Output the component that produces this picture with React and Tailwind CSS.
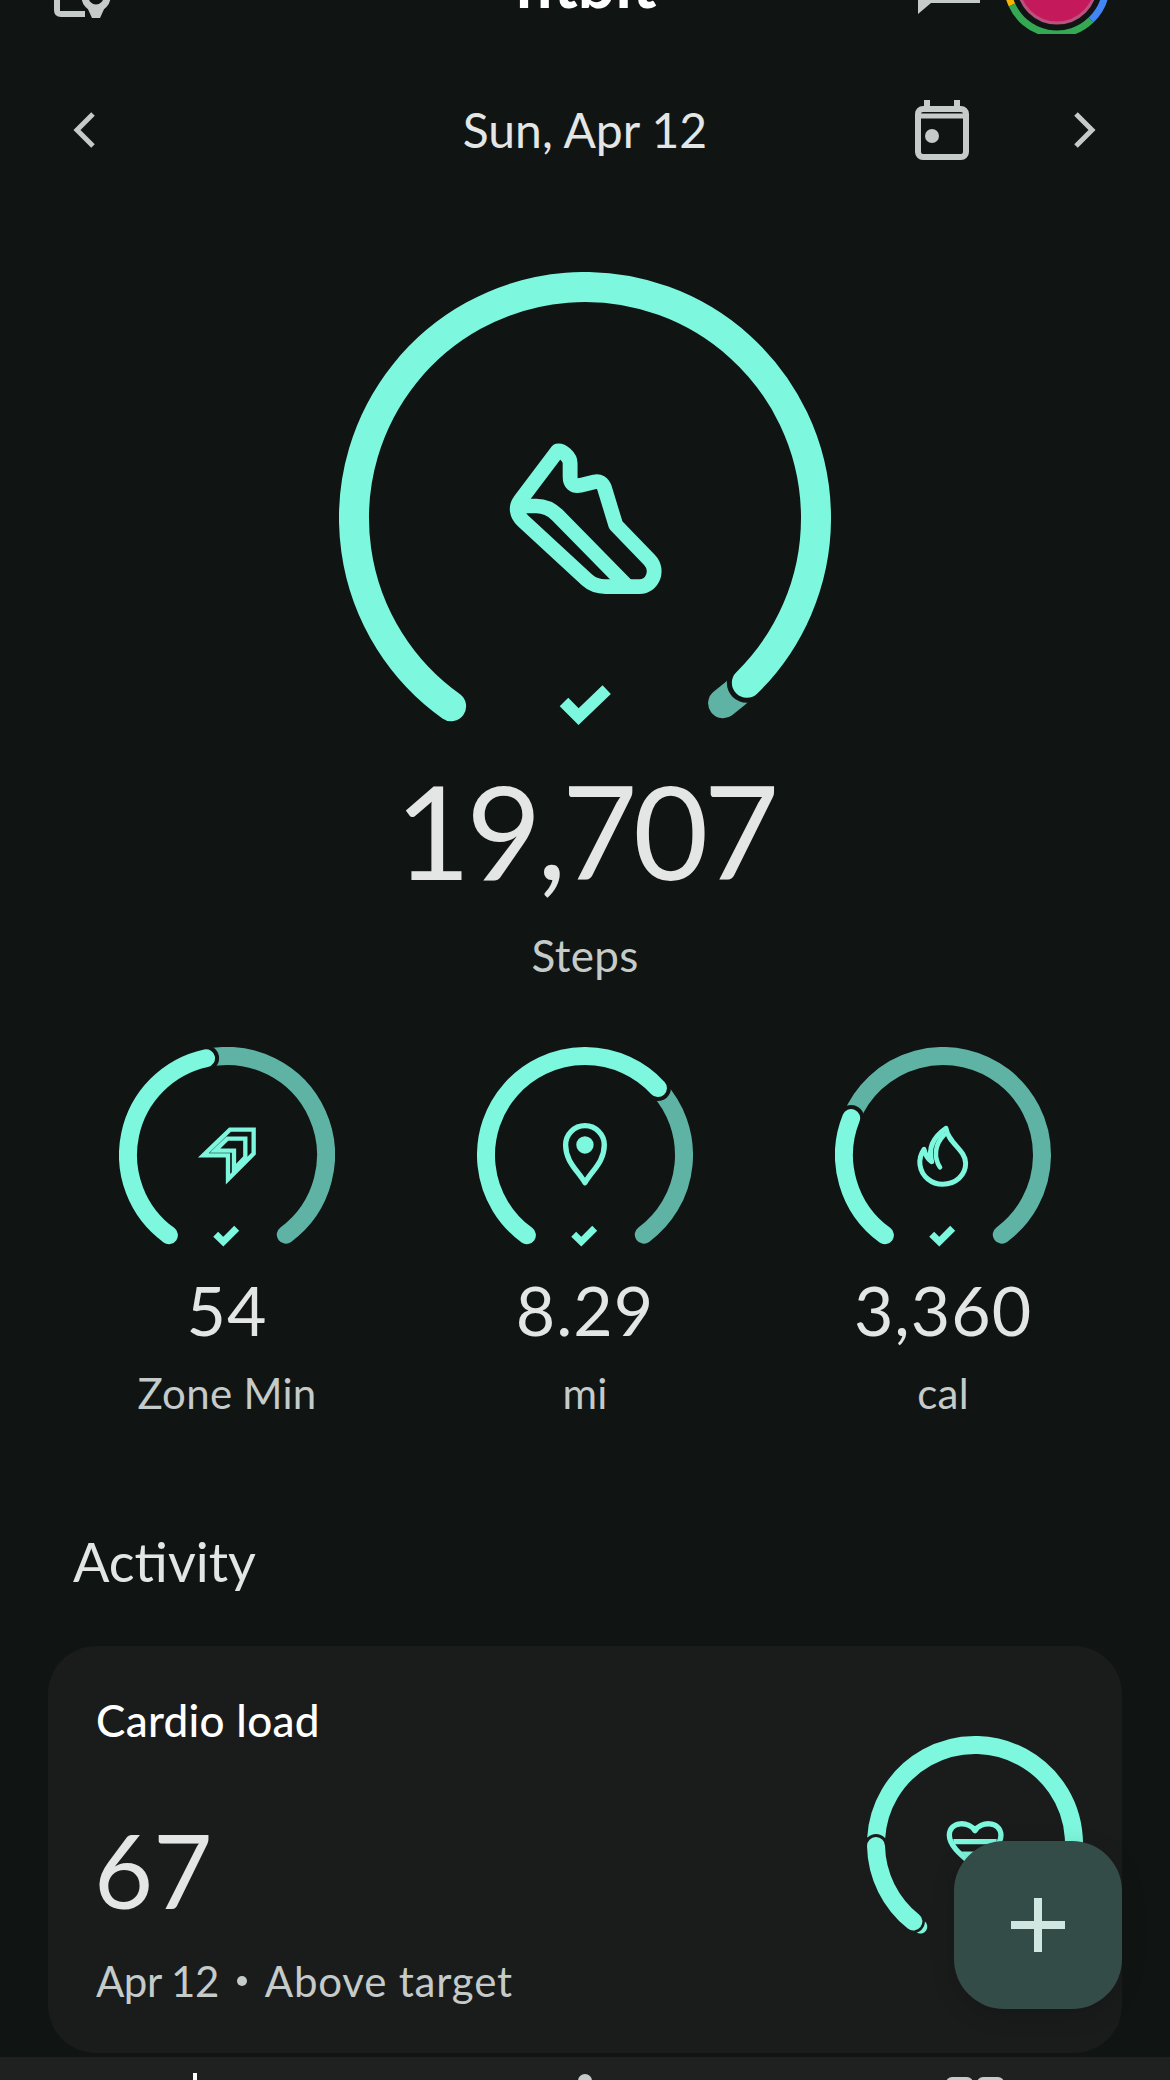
import React from "react";

const BRIGHT = "#7df7dd";
const TAIL = "#5fb3a4";
const BG = "#101514";
const CARD = "#1a1c1c";

// clockwise arc between two points on a circle
const arcPath = (c, r, from, to) => {
  const a1 = Math.atan2(from[1], from[0]);
  const a2 = Math.atan2(to[1], to[0]);
  let diff = a2 - a1;
  if (diff < 0) diff += Math.PI * 2;
  const p = (a) => `${(c + r * Math.cos(a)).toFixed(2)} ${(c + r * Math.sin(a)).toFixed(2)}`;
  return `M${p(a1)} A${r} ${r} 0 ${diff > Math.PI ? 1 : 0} 1 ${p(a2)}`;
};

const BigRing = () => {
  const c = 246;
  const r = 231;
  const left = [-133, 187];
  const right = [162, 165];
  const tail = [138, 185];
  const a = Math.atan2(right[1], right[0]);
  return (
    <svg width="492" height="470" viewBox="0 0 492 470" fill="none">
      <path d={arcPath(c, r, right, tail)} stroke={TAIL} strokeWidth="30" strokeLinecap="round" />
      <circle cx={c + r * Math.cos(a)} cy={c + r * Math.sin(a)} r="20" fill={BG} />
      <path d={arcPath(c, r, left, right)} stroke={BRIGHT} strokeWidth="30" strokeLinecap="round" />
      {/* shoe, traced in crop coords */}
      <g transform="translate(-19 -22) scale(0.338 0.3333)" stroke={BRIGHT} strokeWidth="44" strokeLinejoin="round" strokeLinecap="round">
        <path d="M703 603 L592 752 C578 772 582 795 600 812 L790 990 C805 1004 820 1010 845 1010 L945 1010 C985 1010 1003 960 975 930 L875 825 L842 715 C836 698 825 692 812 696 L770 706 C750 710 740 700 740 680 L740 640 C740 620 715 600 703 603 Z" />
        <path d="M590 768 L640 768 C665 768 685 778 702 795 L905 1005" />
      </g>
      <polyline points="225,430 239.6,444.7 267.7,417.7" stroke={BRIGHT} strokeWidth="12" />
    </svg>
  );
};

const SmallCheck = () => (
  <polyline points="96.7,187.3 104.3,194.7 117.7,181.3" fill="none" stroke={BRIGHT} strokeWidth="7" />
);

const SmallRing = ({ end, children }) => {
  const c = 108;
  const r = 99;
  const a = Math.atan2(end[1], end[0]);
  return (
    <svg width="216" height="205" viewBox="0 0 216 205" fill="none">
      <path d={arcPath(c, r, end, [59, 80])} stroke={TAIL} strokeWidth="18" strokeLinecap="round" />
      <circle cx={c + r * Math.cos(a)} cy={c + r * Math.sin(a)} r="13" fill={BG} />
      <path d={arcPath(c, r, [-58, 80], end)} stroke={BRIGHT} strokeWidth="18" strokeLinecap="round" />
      {children}
      <SmallCheck />
    </svg>
  );
};

const ZoneIcon = () => (
  <g transform="translate(-19 -17) scale(0.3333)" fill="none" stroke={BRIGHT} strokeLinejoin="miter">
    <path d="M310 376 L390 299 L461 299 L461 371 L384 448 L384 376 Z" strokeWidth="13" />
    <path d="M345 362 L382 326 L436 326 L436 382 L402 418 L402 362 Z" strokeWidth="13" />
  </g>
);

const PinIcon = () => (
  <g transform="translate(-377 -17) scale(0.3333)" fill="none" stroke={BRIGHT}>
    <path d="M1455 458 C1432 420 1397 395 1397 345 A58 58 0 1 1 1513 345 C1513 395 1478 420 1455 458 Z" strokeWidth="16" strokeLinejoin="round" />
    <circle cx="1455" cy="345" r="26" fill={BRIGHT} stroke="none" />
  </g>
);

const FlameIcon = () => (
  <g transform="translate(-35 -17) scale(0.3333)" fill="none" stroke={BRIGHT} strokeLinejoin="round" strokeLinecap="round">
    <path d="M438 295 C395 325 385 360 395 395 C380 385 375 370 372 358 C360 375 358 390 360 405 C365 440 395 463 428 463 C468 463 497 435 497 400 C497 360 445 340 438 295 Z" strokeWidth="15" />
    <path d="M432 315 C402 345 402 385 420 412" strokeWidth="14" />
  </g>
);

const CardRing = () => {
  const c = 108;
  const r = 99;
  const lowerStart = [-99, 2];
  const lowerEnd = [-62, 78];
  const tailEnd = [-55, 83];
  const ae = Math.atan2(lowerEnd[1], lowerEnd[0]);
  return (
    <svg width="216" height="205" viewBox="0 0 216 205" fill="none">
      <path d={arcPath(c, r, [-99, -6], [59, 80])} stroke={BRIGHT} strokeWidth="18" />
      <path d={arcPath(c, r, tailEnd, lowerEnd)} stroke={BRIGHT} strokeWidth="14" strokeLinecap="round" />
      <circle cx={c + r * Math.cos(ae)} cy={c + r * Math.sin(ae)} r="11.5" fill={CARD} />
      <circle cx={c - 99} cy={c + 2} r="12" fill={CARD} />
      <path d={arcPath(c, r, lowerEnd, lowerStart)} stroke={BRIGHT} strokeWidth="18" strokeLinecap="round" />
      <g transform="translate(-27 -26) scale(0.3333)" stroke={BRIGHT}>
        <path d="M405 362 C390 335 330 330 328 375 C328 410 370 440 405 470 C440 440 483 410 483 375 C480 330 420 335 405 362 Z" strokeWidth="16" fill="none" strokeLinejoin="round" />
        <path d="M340 395 L470 395" strokeWidth="16" />
        <path d="M365 425 L445 425 L405 465 Z" fill={BRIGHT} />
      </g>
    </svg>
  );
};

const stats = [
  { value: "54", label: "Zone Min", end: [-21, -97], icon: <ZoneIcon /> },
  { value: "8.29", label: "mi", end: [73, -67], icon: <PinIcon /> },
  { value: "3,360", label: "cal", end: [-92, -37], icon: <FlameIcon /> },
];

export default function App() {
  return (
    <div className="relative h-[2080px] w-[1170px] overflow-hidden bg-[#101514] font-['Lato','Liberation_Sans',sans-serif] text-[#e3e6e5]">
      {/* header, mostly scrolled off */}
      <div className="grid h-[34px] grid-cols-3">
        <div className="pl-[54px]">
          <svg width="60" height="18" viewBox="0 0 60 18" fill="none" stroke="#c4cbc9">
            <path d="M3 0 V10 C3 13 4 14 7 14 H31" strokeWidth="6" />
            <circle cx="42" cy="-3" r="11" strokeWidth="7" />
            <path d="M33 7 H51 L46 18 H38 Z" fill="#c4cbc9" strokeWidth="0" />
          </svg>
        </div>
        <div className="flex justify-center">
          <span className="-mt-[47px] text-[66px] leading-[60px] font-bold text-white">fitbit</span>
        </div>
        <div className="flex justify-end pr-[60px]">
          <svg width="192" height="34" viewBox="918 0 192 34" fill="none">
            <path d="M918 0 V14 L931 3 H980 V0 Z" fill="#c4cbc9" />
            <circle cx="1057" cy="-16" r="39" fill="#c41a5c" stroke="#b9527f" strokeWidth="3" />
            <path d="M1009 -3 A49 49 0 0 0 1012 5" stroke="#f5b400" strokeWidth="7" />
            <path d="M1012 5 A49 49 0 0 0 1091 20" stroke="#34a853" strokeWidth="7" />
            <path d="M1091 20 A49 49 0 0 0 1106 -10" stroke="#4285f4" strokeWidth="7" />
          </svg>
        </div>
      </div>

      {/* date row */}
      <div className="mt-[66px] grid h-[60px] grid-cols-[1fr_auto_1fr] items-center">
        <div className="pl-[73px]">
          <svg width="22" height="36" viewBox="0 0 22 36" fill="none" stroke="#c4cbc9" strokeWidth="5">
            <polyline points="20,2 4,18 20,34" />
          </svg>
        </div>
        <div className="text-[48px] leading-[60px] text-[#e3e6e5]">Sun, Apr 12</div>
        <div className="flex items-center justify-end gap-[105px] pr-[74px]">
          <svg width="54" height="60" viewBox="0 0 54 60" fill="none" stroke="#c4cbc9">
            <path d="M12 0 V8 M42 0 V8" strokeWidth="6" />
            <rect x="3" y="9" width="48" height="48" rx="5" strokeWidth="6" />
            <path d="M3 16 H51" strokeWidth="5" />
            <circle cx="17" cy="36" r="7" fill="#c4cbc9" stroke="none" />
          </svg>
          <svg width="22" height="36" viewBox="0 0 22 36" fill="none" stroke="#c4cbc9" strokeWidth="5">
            <polyline points="2,2 18,18 2,34" />
          </svg>
        </div>
      </div>

      {/* steps */}
      <div className="mt-[112px] flex flex-col items-center">
        <BigRing />
        <div className="mt-[38px] text-[130px] leading-[100px] tracking-[-4.5px]">19,707</div>
        <div className="mt-[50px] text-[44px] leading-[50px] tracking-[0.3px] text-[#c4cbc9]">Steps</div>
      </div>

      {/* small stats */}
      <div className="mt-[67px] grid grid-cols-3 px-[48px]">
        {stats.map((s) => (
          <div key={s.label} className="flex flex-col items-center">
            <SmallRing end={s.end}>{s.icon}</SmallRing>
            <div className="mt-[28px] text-[68px] leading-[60px] tracking-[1px]">{s.value}</div>
            <div className="mt-[28px] text-[42px] leading-[50px] tracking-[0.3px] text-[#c4cbc9]">{s.label}</div>
          </div>
        ))}
      </div>

      <div className="mt-[114px] pl-[73px] text-[54px] leading-[60px]">Activity</div>

      {/* card */}
      <div className="mx-[48px] mt-[54px] flex h-[407px] justify-between rounded-[48px] bg-[#1a1c1c] pt-[49px] pr-[39px] pl-[48px]">
        <div>
          <div className="text-[44px] leading-[50px] font-medium tracking-[0.3px] text-white">Cardio load</div>
          <div className="mt-[80px] -ml-[2px] text-[102px] leading-[90px]">67</div>
          <div className="mt-[41px] flex items-center text-[42px] leading-[50px] text-[#c4cbc9]">
            <span className="tracking-[-0.5px]">Apr 12</span>
            <span className="mx-[18px] h-[10px] w-[10px] rounded-full bg-[#c4cbc9]" />
            <span className="tracking-[0.8px]">Above target</span>
          </div>
        </div>
        <div className="mt-[41px]">
          <CardRing />
        </div>
      </div>

      {/* bottom nav, cut by the window */}
      <div className="mt-[4px] grid h-[23px] grid-cols-3 overflow-hidden bg-[#1e2120]">
        <div className="flex justify-center">
          <div className="mt-[16px] h-[8px] w-[4px] bg-white" />
        </div>
        <div className="flex justify-center">
          <div className="mt-[17px] h-[20px] w-[14px] rounded-t-full bg-[#c4cbc9]" />
        </div>
        <div className="flex justify-center gap-[4px]">
          <div className="mt-[20px] h-[10px] w-[27px] rounded-t-[6px] bg-[#c4cbc9]" />
          <div className="mt-[20px] h-[10px] w-[27px] rounded-t-[6px] bg-[#c4cbc9]" />
        </div>
      </div>

      {/* add button */}
      <button className="absolute top-[1841px] left-[954px] flex h-[168px] w-[168px] items-center justify-center rounded-[50px] bg-[#344c47] shadow-[0_6px_24px_rgba(0,0,0,0.15)]">
        <svg width="54" height="54" viewBox="0 0 54 54" fill="#cfe6e1">
          <rect x="23" y="0" width="8" height="54" />
          <rect x="0" y="23" width="54" height="8" />
        </svg>
      </button>
    </div>
  );
}
